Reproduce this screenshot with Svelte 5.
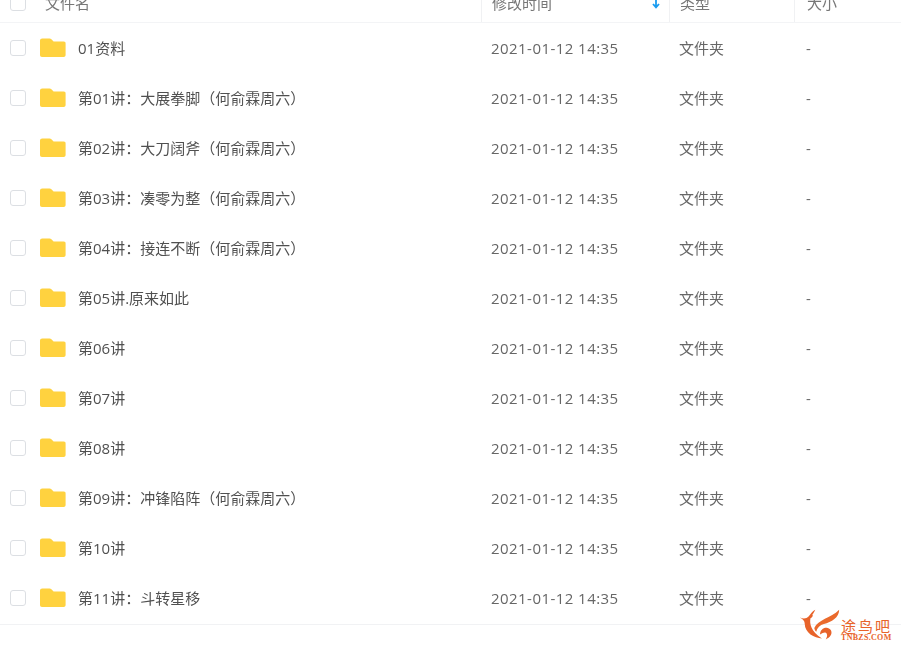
<script>
  const note = '（何俞霖周六）';
  const names = ['01资料', '第01讲：大展拳脚' + note, '第02讲：大刀阔斧' + note, '第03讲：凑零为整' + note, '第04讲：接连不断' + note, '第05讲.原来如此', '第06讲', '第07讲', '第08讲', '第09讲：冲锋陷阵' + note, '第10讲', '第11讲：斗转星移'];
</script>

<div class="page">
  <div class="list">
    <div class="row head">
      <div class="check-cell"><span class="box"></span></div>
      <div class="name head-name">文件名</div>
      <div class="date divided">修改时间
        <svg class="sort" width="10" height="10" viewBox="0 0 10 10"><path d="M5 0v8M2 5l3 3.4L8 5" fill="none" stroke="#1a9cf0" stroke-width="1.8"/></svg>
      </div>
      <div class="type divided">类型</div>
      <div class="size divided">大小</div>
    </div>
    {#each names as name}
      <div class="row">
        <div class="check-cell"><span class="box"></span></div>
        <svg class="folder" width="26" height="20" viewBox="0 0 26 20">
          <path d="M0 2.500C0 1.200 1 .4 2.200.4h7.400c.7 0 1.300.3 1.800.8L13.600 3.600H23.800C25 3.600 25.600 4.400 25.600 5.400V17c0 1.200-.8 2-2 2H2c-1.200 0-2-.8-2-2z" fill="#ffd23f"/>
        </svg>
        <div class="name">{name}</div>
        <div class="date">2021-01-12 14:35</div>
        <div class="type">文件夹</div>
        <div class="size">-</div>
      </div>
    {/each}
  </div>
  <div class="logo">
    <svg width="44" height="36" viewBox="0 0 46 36">
      <path d="M1 9c4 2 7 1 9-1 2-2 4-6 7-7-1 2-2 4-3 5 1 1 0 3-2 4-1 5 0 14 12 21-8 0-18-6-18-15 0-4-2-5-5-7z" fill="#e8632a"/>
      <path d="M16 20C20 11 33 10 42 1c0 8-8 13-16 15-4 1-7 4-8 8-1-1-2-3-2-4z" fill="#ea6a2c"/>
      <path d="M22 27c0-5 4-8 8-7 4 1 5 5 3 8-1 2-3 3-5 4 1-2 2-4 1-6-1-2-4-1-7 1z" fill="#e8632a"/>
    </svg>
    <div class="logo-text">
      <div class="cn">途鸟吧</div>
      <div class="en">TNBZS.COM</div>
    </div>
  </div>
</div>

<style>
  :global(body) {
    margin: 0;
    background: #fff;
  }
  .page {
    position: relative;
    width: 901px;
    height: 646px;
    overflow: hidden;
    background: #fff;
    font-family: "Open Sans", "Noto Sans CJK SC", sans-serif;
    font-size: 15px;
    line-height: 20px;
    color: #555;
  }
  .page > .list {
    margin-top: -28px;
    padding-bottom: 1px;
    filter: blur(0.4px);
  }
  .row {
    display: flex;
    align-items: center;
    height: 50px;
  }
  .list {
    border-bottom: 1px solid #f1f2f4;
  }
  .head {
    border-bottom: 1px solid #f3f4f6;
    box-sizing: content-box;
    align-items: stretch;
    color: #777;
  }
  .head > div {
    display: flex;
    align-items: center;
    padding-top: 11px;
    box-sizing: border-box;
  }
  .check-cell {
    display: flex;
    align-items: center;
    width: 40px;
    padding-left: 10px;
    box-sizing: border-box;
    flex: none;
  }
  .box {
    width: 16px;
    height: 16px;
    border: 1px solid #dcdfe3;
    border-radius: 3px;
    box-sizing: border-box;
    background: #fff;
  }
  .folder {
    flex: none;
    margin-right: 12px;
    margin-top: -1px;
  }
  .name {
    width: 403px;
    flex: none;
    color: #505050;
    white-space: nowrap;
  }
  .head .head-name {
    width: 441px;
    padding-left: 5px;
    color: #777;
  }
  .date {
    width: 188px;
    flex: none;
    padding-left: 10px;
    box-sizing: border-box;
    color: #666;
    letter-spacing: 0.45px;
    position: relative;
  }
  .type {
    width: 125px;
    flex: none;
    padding-left: 10px;
    box-sizing: border-box;
    color: #666;
  }
  .size {
    flex: 1;
    padding-left: 12px;
    color: #666;
  }
  .head .date, .head .type, .head .size {
    color: #777;
    letter-spacing: 0;
  }
  .divided {
    border-left: 1px solid #f0f1f3;
  }
  .sort {
    position: absolute;
    right: 8px;
    top: 27px;
  }
  .logo {
    position: absolute;
    left: 799px;
    top: 608px;
    display: flex;
    align-items: flex-start;
    gap: 0;
  }
  .logo-text {
    color: #e8632a;
    margin-top: 9px;
    margin-left: -2px;
  }
  .cn {
    font-family: "Noto Sans CJK SC", sans-serif;
    font-size: 15px;
    line-height: 17px;
    letter-spacing: 2px;
  }
  .en {
    font-family: "Liberation Serif", serif;
    font-weight: bold;
    font-size: 8px;
    line-height: 8px;
    letter-spacing: 0.300px;
  }
</style>
